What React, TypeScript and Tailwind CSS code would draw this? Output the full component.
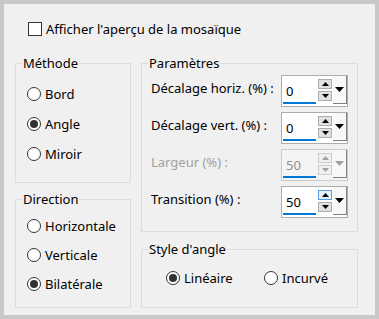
import React from "react";

const font = { fontFamily: '"Noto Sans", "Open Sans", sans-serif' };

function Radio({ label, checked }: { label: string; checked?: boolean }) {
  return (
    <div className="flex items-center gap-[4px]">
      <div className="flex h-[14px] w-[14px] items-center justify-center rounded-full border border-[#333333] bg-white">
        {checked && <div className="h-[8px] w-[8px] rounded-full bg-[#333333]" />}
      </div>
      <span className="leading-4">{label}</span>
    </div>
  );
}

function Tri({ up, color, w = 7, h = 4 }: { up?: boolean; color: string; w?: number; h?: number }) {
  return (
    <svg width={w} height={h} viewBox={`0 0 ${w} ${h}`}>
      {up ? (
        <polygon points={`0,${h} ${w / 2},0 ${w},${h}`} fill={color} />
      ) : (
        <polygon points={`0,0 ${w},0 ${w / 2},${h}`} fill={color} />
      )}
    </svg>
  );
}

function Spin({ value, disabled, hot }: { value: string; disabled?: boolean; hot?: boolean }) {
  const arrow = disabled ? "#a0a0a0" : "#000000";
  return (
    <div
      className={
        disabled
          ? "flex h-[32px] w-[67px] border border-[#cccccc] bg-[#f4f4f4]"
          : "flex h-[32px] w-[67px] border border-[#adadad] bg-white"
      }
    >
      <div className="ml-[1px] flex w-[33px] flex-col pt-[7px]">
        <span className={disabled ? "h-4 pl-[3px] leading-4 text-[#8d8d8d]" : "h-4 pl-[3px] leading-4"}>{value}</span>
        <div className="mt-[3px] h-[2px] bg-[#0078d7]" />
      </div>
      <div className="ml-[2px] flex w-[14px] flex-col gap-[2px] pt-[3px]">
        <div
          className={
            hot
              ? "flex h-[10px] items-center justify-center border border-[#569de5] bg-[#e5f1fb]"
              : disabled
              ? "flex h-[10px] items-center justify-center border border-[#cccccc] bg-[#f0f0f0]"
              : "flex h-[10px] items-center justify-center border border-[#adadad] bg-[#e1e1e1]"
          }
        >
          <Tri up color={arrow} />
        </div>
        <div
          className={
            disabled
              ? "flex h-[10px] items-center justify-center border border-[#cccccc] bg-[#f0f0f0]"
              : "flex h-[10px] items-center justify-center border border-[#adadad] bg-[#e1e1e1]"
          }
        >
          <Tri color={arrow} />
        </div>
      </div>
      <div className="ml-[1px] flex h-[28px] w-[14px] items-center justify-center border-r border-b border-[#808080] bg-[#f8f8f8]">
        <Tri color={arrow} w={9} h={5} />
      </div>
    </div>
  );
}

function Group({
  title,
  className,
  inner,
  children,
}: {
  title: string;
  className: string;
  inner: string;
  children: React.ReactNode;
}) {
  return (
    <fieldset className={"border border-[#dcdcdc] " + className}>
      <legend className="ml-[6px] px-[1px] leading-4">{title}</legend>
      <div className={inner}>{children}</div>
    </fieldset>
  );
}

function Row({ label, value, disabled, hot }: { label: string; value: string; disabled?: boolean; hot?: boolean }) {
  return (
    <div className="flex h-[32px] items-start">
      <span className={disabled ? "mt-[5px] flex-1 leading-4 text-[#a0a0a0]" : "mt-[5px] flex-1 leading-4"}>{label}</span>
      <Spin value={value} disabled={disabled} hot={hot} />
    </div>
  );
}

export default function App() {
  return (
    <div
      className="h-[319px] w-[379px] border-4 border-[#c8c8c8] bg-[#f0f0f0] text-[13px] text-black"
      style={font}
    >
      <div className="mt-[17px] flex h-4 items-center gap-[4px] pl-[24px]">
        <div className="h-[14px] w-[14px] border border-[#333333] bg-white" />
        <span className="leading-4">Afficher l'aperçu de la mosaïque</span>
      </div>

      <div className="mt-[18px] flex gap-[10px] pl-[11px]">
        <div className="flex w-[116px] flex-col gap-[8px]">
          <Group title="Méthode" className="h-[128px]" inner="pl-[11px] pt-[8px]">
            <div className="flex h-[30px] items-center"><Radio label="Bord" /></div>
            <div className="flex h-[30px] items-center"><Radio label="Angle" checked /></div>
            <div className="flex h-[30px] items-center"><Radio label="Miroir" /></div>
          </Group>
          <Group title="Direction" className="h-[117px]" inner="pl-[11px] pt-[4px]">
            <div className="flex h-[29px] items-center"><Radio label="Horizontale" /></div>
            <div className="flex h-[29px] items-center"><Radio label="Verticale" /></div>
            <div className="flex h-[29px] items-center"><Radio label="Bilatérale" checked /></div>
          </Group>
        </div>

        <div className="flex w-[217px] flex-col gap-[9px]">
          <Group title="Paramètres" className="h-[177px]" inner="flex flex-col gap-[5px] px-[9px] pt-[4px]">
            <Row label="Décalage horiz. (%) :" value="0" />
            <Row label="Décalage vert. (%) :" value="0" />
            <Row label="Largeur (%) :" value="50" disabled />
            <Row label="Transition (%) :" value="50" hot />
          </Group>
          <Group title="Style d'angle" className="h-[67px]" inner="pl-[24px] pt-[13px]">
            <div className="flex h-4 items-center">
              <div className="w-[98px]"><Radio label="Linéaire" checked /></div>
              <Radio label="Incurvé" />
            </div>
          </Group>
        </div>
      </div>
    </div>
  );
}
